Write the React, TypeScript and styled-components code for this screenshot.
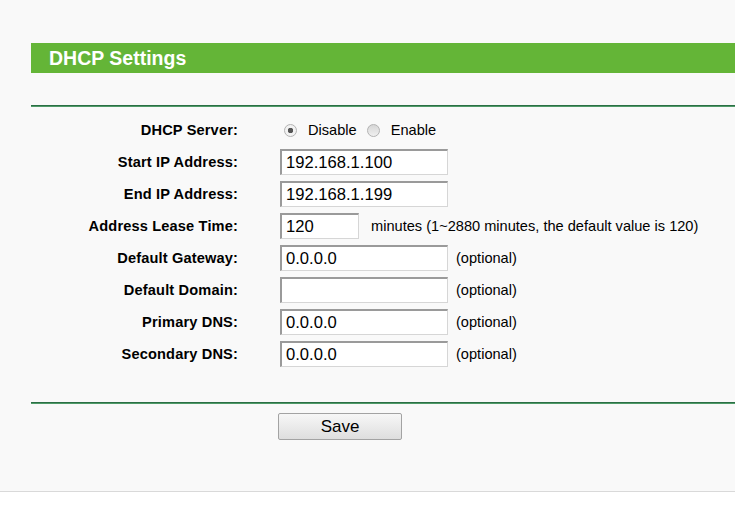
import { Fragment } from 'react'
import { createGlobalStyle, styled } from 'styled-components'

const Global = createGlobalStyle`
  html, body {
    margin: 0;
    padding: 0;
    background: #ffffff;
  }
  body {
    font-family: "Liberation Sans", Arial, sans-serif;
    color: #000;
  }
`

const Page = styled.div`
  box-sizing: border-box;
  height: 492px;
  padding: 43px 0 0 31px;
  background: #f9f9f9;
  border-bottom: 1px solid #d9d9d9;
`

const TitleBar = styled.div`
  height: 30px;
  line-height: 30px;
  padding-left: 18px;
  background: #64b537;
  color: #ffffff;
  font-size: 19.5px;
  font-weight: bold;
`

const Divider = styled.div<{ $gap: number }>`
  margin-top: ${(p) => p.$gap}px;
  height: 2px;
  background: linear-gradient(#2b6f45 0 50%, #4f9a68 50% 100%);
`

const Form = styled.div`
  display: grid;
  grid-template-columns: 207px 1fr;
  grid-auto-rows: 32px;
  column-gap: 42px;
  align-items: center;
  margin-top: 7px;
`

const Label = styled.div`
  text-align: right;
  font-size: 14.6px;
  font-weight: bold;
  letter-spacing: 0.15px;
  white-space: nowrap;
`

const Field = styled.div`
  display: flex;
  align-items: center;
  font-size: 14.6px;
  white-space: nowrap;
`

const TextInput = styled.input<{ $width: number }>`
  box-sizing: border-box;
  width: ${(p) => p.$width}px;
  height: 26px;
  margin: 0;
  padding: 0 4px;
  background: #ffffff;
  border-style: solid;
  border-width: 2px 1px 1px 2px;
  border-color: #9a9a9a #d6d6d6 #d6d6d6 #9a9a9a;
  font-family: "Liberation Sans", Arial, sans-serif;
  font-size: 16.6px;
  color: #000;
  outline: none;
`

const Note = styled.span<{ $gap: number }>`
  margin-left: ${(p) => p.$gap}px;
`

const RadioGroup = styled.label`
  display: flex;
  align-items: center;
  margin-left: 4px;
  margin-right: 6px;
`

const Radio = styled.span<{ $checked?: boolean }>`
  box-sizing: border-box;
  width: 13px;
  height: 13px;
  margin-right: 11px;
  border-radius: 50%;
  border: 1px solid #b3b3b3;
  background: ${(p) =>
    p.$checked
      ? 'radial-gradient(circle, #555 0 2.5px, #f2f2f2 3px 100%)'
      : 'linear-gradient(#d6d6d6, #f0f0f0)'};
`

const ButtonRow = styled.div`
  margin-top: 9px;
  padding-left: 247px;
`

const SaveButton = styled.button`
  box-sizing: border-box;
  width: 124px;
  height: 27px;
  margin: 0;
  padding: 0;
  border: 1px solid #a3a3a3;
  border-radius: 2px;
  background: linear-gradient(#f7f7f7, #dedede);
  font-family: "Liberation Sans", Arial, sans-serif;
  font-size: 17px;
  color: #000;
`

const rows: { label: string; value: string; width: number; note?: string }[] = [
  { label: 'Start IP Address:', value: '192.168.1.100', width: 168 },
  { label: 'End IP Address:', value: '192.168.1.199', width: 168 },
  {
    label: 'Address Lease Time:',
    value: '120',
    width: 79,
    note: 'minutes (1~2880 minutes, the default value is 120)',
  },
  { label: 'Default Gateway:', value: '0.0.0.0', width: 168, note: '(optional)' },
  { label: 'Default Domain:', value: '', width: 168, note: '(optional)' },
  { label: 'Primary DNS:', value: '0.0.0.0', width: 168, note: '(optional)' },
  { label: 'Secondary DNS:', value: '0.0.0.0', width: 168, note: '(optional)' },
]

export default function App() {
  return (
    <>
      <Global />
      <Page>
        <TitleBar>DHCP Settings</TitleBar>
        <Divider $gap={32} />
        <Form>
          <Label>DHCP Server:</Label>
          <Field>
            <RadioGroup>
              <Radio $checked />
              Disable
            </RadioGroup>
            <RadioGroup>
              <Radio />
              Enable
            </RadioGroup>
          </Field>
          {rows.map((r) => (
            <Fragment key={r.label}>
              <Label>{r.label}</Label>
              <Field>
                <TextInput $width={r.width} defaultValue={r.value} />
                {r.note && <Note $gap={r.width < 100 ? 12 : 8}>{r.note}</Note>}
              </Field>
            </Fragment>
          ))}
        </Form>
        <Divider $gap={32} />
        <ButtonRow>
          <SaveButton>Save</SaveButton>
        </ButtonRow>
      </Page>
    </>
  )
}
